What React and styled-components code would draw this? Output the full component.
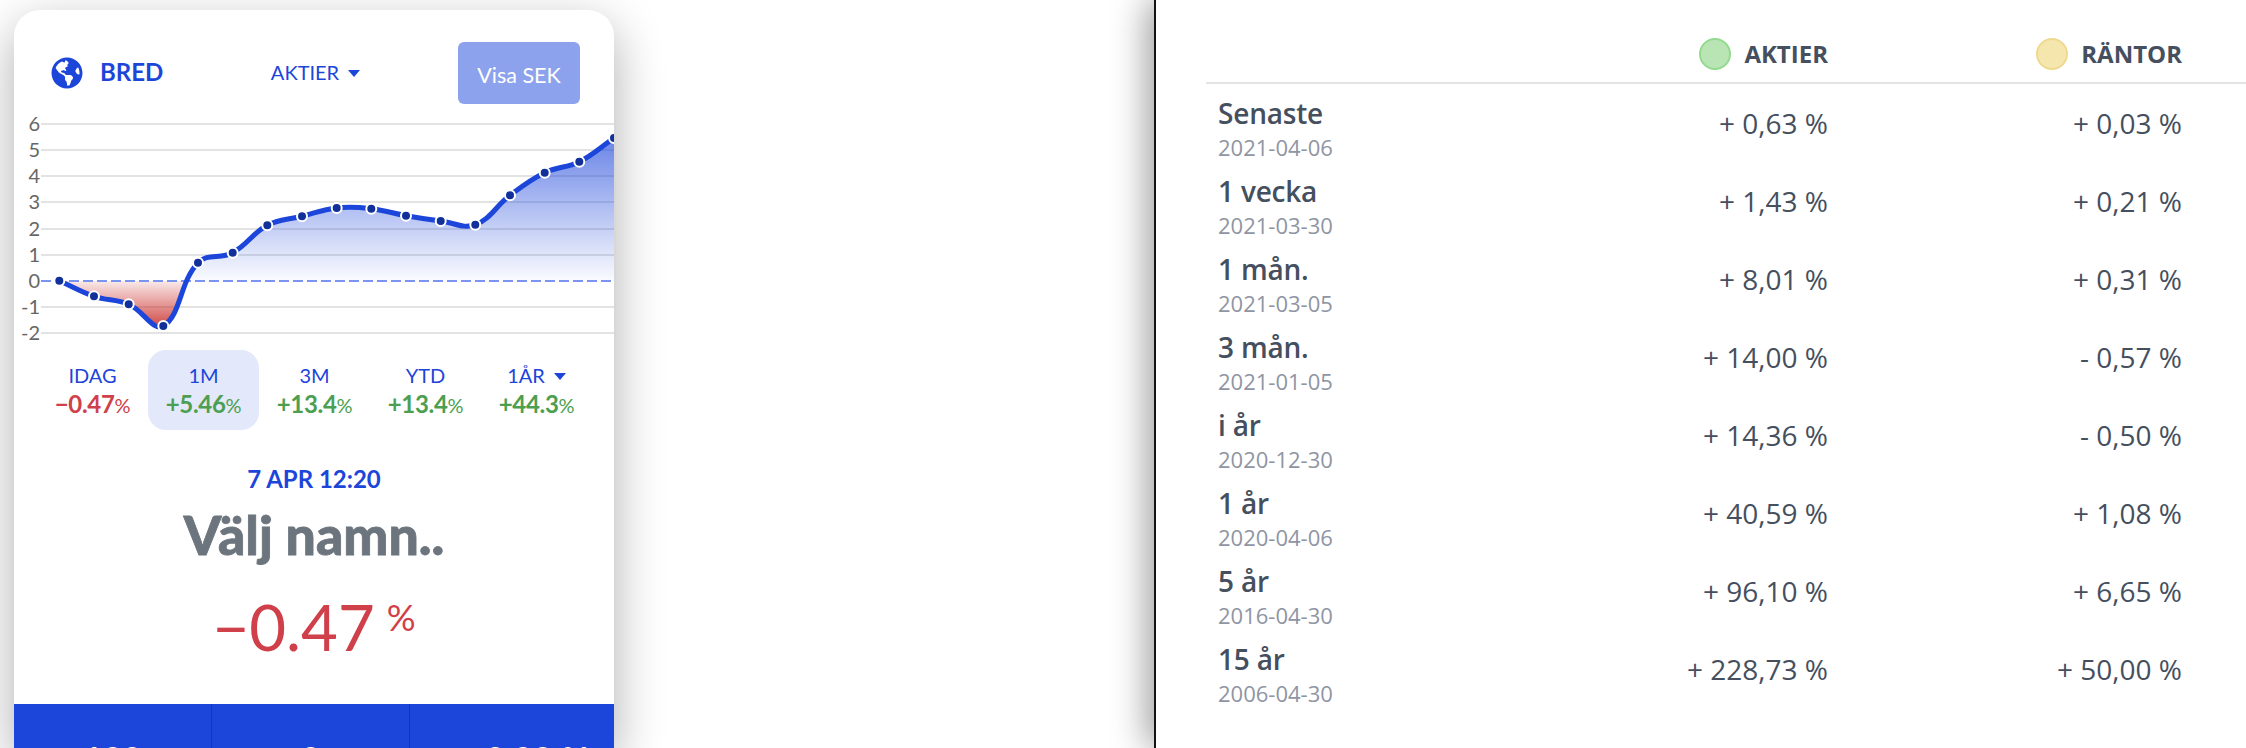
import React from 'react';
import styled, { createGlobalStyle } from 'styled-components';
import { FaGlobeAmericas } from 'react-icons/fa';

const BLUE = '#1c45da';
const RED = '#d0404a';
const GREEN = '#4c9f50';
const SLATE = '#454f5e';

const GlobalStyle = createGlobalStyle`
  html, body {
    margin: 0;
    padding: 0;
    background: #fff;
  }
`;

const Page = styled.div`
  width: 2246px;
  height: 748px;
  display: flex;
  overflow: hidden;
  background: #fff;
`;
const LeftSide = styled.div`
  width: 1154px;
  flex: none;
  padding: 10px 0 0 14px;
  box-sizing: border-box;
`;
const Card = styled.div`
  width: 600px;
  height: 738px;
  background: #fff;
  border-radius: 26px 26px 0 0;
  box-shadow: 0 16px 50px rgba(0, 0, 0, 0.32);
  overflow: hidden;
  font-family: 'Lato', sans-serif;
`;
const CardHeader = styled.div`
  height: 100px;
  box-sizing: border-box;
  padding: 32px 34px 6px 37px;
  display: grid;
  grid-template-columns: 1fr 1fr 1fr;
  align-items: center;
`;
const Brand = styled.div`
  display: flex;
  align-items: center;
  gap: 17px;
  color: ${BLUE};
  font-size: 24px;
  font-weight: 700;
  svg {
    width: 32px;
    height: 32px;
  }
`;
const BrandName = styled.span`
  margin-bottom: 4px;
`;
const Caret = styled.span`
  display: inline-block;
  margin-left: 9px;
  vertical-align: 3px;
  border-top: 7px solid ${BLUE};
  border-left: 6px solid transparent;
  border-right: 6px solid transparent;
`;
const MarketPick = styled.div`
  color: ${BLUE};
  font-size: 20px;
  justify-self: center;
  margin-bottom: 2px;
`;
const VisaButton = styled.button`
  justify-self: end;
  width: 122px;
  height: 62px;
  border: 0;
  border-radius: 6px;
  background: #8da2ec;
  color: #fff;
  font-family: inherit;
  font-size: 21.5px;
  padding: 4px 0 0;
`;
const ChartSvg = styled.svg`
  display: block;
  width: 600px;
  height: 235px;
`;
const Tabs = styled.div`
  display: grid;
  grid-template-columns: repeat(5, 111px);
  margin: 5px 0 0 23px;
`;
const Tab = styled.div`
  height: 80px;
  box-sizing: border-box;
  padding-top: 12px;
  border-radius: 18px;
  text-align: center;
  background: ${(p) => (p.$active ? '#e3e8fb' : 'transparent')};
`;
const TabLabel = styled.div`
  color: ${BLUE};
  font-size: 20px;
  line-height: 26px;
`;
const TabValue = styled.div`
  color: ${(p) => (p.$negative ? RED : GREEN)};
  font-size: 24px;
  font-weight: 700;
  line-height: 32px;
  letter-spacing: -0.3px;
  span {
    font-size: 20px;
    font-weight: 400;
  }
`;
const Summary = styled.div`
  height: 274px;
  box-sizing: border-box;
  text-align: center;
  padding-top: 34px;
`;
const SummaryDate = styled.div`
  color: ${BLUE};
  font-size: 24px;
  font-weight: 700;
  line-height: 30px;
`;
const SummaryName = styled.div`
  color: #6c757d;
  font-size: 53.5px;
  font-weight: 900;
  line-height: 62px;
  margin-top: 9px;
  -webkit-text-stroke: 0.8px #6c757d;
`;
const SummaryChange = styled.div`
  color: ${RED};
  font-size: 63.5px;
  line-height: 80px;
  margin-top: 22px;
  sup {
    font-size: 36px;
    margin-left: 12px;
    line-height: 0;
    vertical-align: 20px;
  }
`;
const StatBar = styled.div`
  height: 44px;
  overflow: hidden;
  display: grid;
  grid-template-columns: 197px 198px 1fr;
  background: ${BLUE};
  color: #fff;
`;
const Stat = styled.div`
  border-left: ${(p) => (p.$first ? '0' : '1px solid #1636ad')};
  padding: 35px 0 0 ${(p) => p.$indent || 0}px;
  text-align: center;
  font-size: 34px;
  font-weight: 700;
  line-height: 40px;
`;

const RightSide = styled.div`
  flex: 1;
  position: relative;
  border-left: 2px solid #15130f;
  background: #fff;
  box-shadow: -6px 0 34px rgba(0, 0, 0, 0.4);
  padding-left: 50px;
  font-family: 'Open Sans', sans-serif;
  color: ${SLATE};
`;
const TableHead = styled.div`
  height: 84px;
  box-sizing: border-box;
  border-bottom: 2px solid #e4e4e4;
  padding: 38px 0 0 12px;
  display: grid;
  grid-template-columns: 300px 310px 354px;
`;
const HeadCell = styled.div`
  grid-column: ${(p) => p.$col};
  display: flex;
  justify-content: flex-end;
  align-items: center;
  gap: 13px;
  height: 32px;
  font-size: 24px;
  font-weight: 700;
`;
const HeadLabel = styled.span`
  margin-bottom: 2px;
`;
const Dot = styled.span`
  width: 32px;
  height: 32px;
  box-sizing: border-box;
  border-radius: 50%;
  background: ${(p) => p.$fill};
  border: 2px solid ${(p) => p.$edge};
`;
const TableRow = styled.div`
  height: 78px;
  padding-left: 12px;
  display: grid;
  grid-template-columns: 300px 310px 354px;
`;
const PeriodName = styled.div`
  font-size: 28px;
  font-weight: 600;
  line-height: 38px;
  padding-top: 10px;
  letter-spacing: -0.2px;
`;
const PeriodDate = styled.div`
  color: #8f95a3;
  font-size: 22px;
  font-weight: 400;
  line-height: 30px;
  letter-spacing: 0;
`;
const Value = styled.div`
  font-size: 28px;
  line-height: 38px;
  padding-top: 20px;
  text-align: right;
`;

const tabs = [
  { label: 'IDAG', value: '−0.47', negative: true },
  { label: '1M', value: '+5.46', active: true },
  { label: '3M', value: '+13.4' },
  { label: 'YTD', value: '+13.4' },
  { label: '1ÅR', value: '+44.3', caret: true },
];

const rows = [
  ['Senaste', '2021-04-06', '+ 0,63 %', '+ 0,03 %'],
  ['1 vecka', '2021-03-30', '+ 1,43 %', '+ 0,21 %'],
  ['1 mån.', '2021-03-05', '+ 8,01 %', '+ 0,31 %'],
  ['3 mån.', '2021-01-05', '+ 14,00 %', '- 0,57 %'],
  ['i år', '2020-12-30', '+ 14,36 %', '- 0,50 %'],
  ['1 år', '2020-04-06', '+ 40,59 %', '+ 1,08 %'],
  ['5 år', '2016-04-30', '+ 96,10 %', '+ 6,65 %'],
  ['15 år', '2006-04-30', '+ 228,73 %', '+ 50,00 %'],
];

// chart uses page coordinates, see the viewBox
const points = [
  [59.3, 280.7], [94, 296.3], [128.7, 304.3], [163.3, 326], [198, 262.7],
  [232.7, 252.7], [267.3, 225.3], [302, 216.3], [336.7, 208], [371.3, 208.7],
  [406, 215.7], [440.7, 221], [475.3, 224.7], [510, 195.3], [544.7, 172.7],
  [579.3, 161.7], [614, 138],
];
const gridLines = [
  ['6', 124], ['5', 150], ['4', 176], ['3', 202], ['2', 229],
  ['1', 255], ['0', 281], ['-1', 307], ['-2', 333],
];

// same spline as chart.js with tension 0.4
function splinePath(pts, tension = 0.4) {
  let d = `M${pts[0][0]} ${pts[0][1]}`;
  const ctrl = (prev, cur, next) => {
    const d01 = Math.hypot(cur[0] - prev[0], cur[1] - prev[1]);
    const d12 = Math.hypot(next[0] - cur[0], next[1] - cur[1]);
    const fa = (tension * d01) / (d01 + d12);
    const fb = (tension * d12) / (d01 + d12);
    return [
      [cur[0] - fa * (next[0] - prev[0]), cur[1] - fa * (next[1] - prev[1])],
      [cur[0] + fb * (next[0] - prev[0]), cur[1] + fb * (next[1] - prev[1])],
    ];
  };
  for (let i = 0; i < pts.length - 1; i++) {
    const a = ctrl(pts[i - 1] || pts[i], pts[i], pts[i + 1]);
    const b = ctrl(pts[i], pts[i + 1], pts[i + 2] || pts[i + 1]);
    d += `C${a[1][0]} ${a[1][1]} ${b[0][0]} ${b[0][1]} ${pts[i + 1][0]} ${pts[i + 1][1]}`;
  }
  return d;
}

function Chart() {
  const line = splinePath(points);
  const area = `${line}L614 281L59.3 281Z`;
  return (
    <ChartSvg viewBox="14 110 600 235">
      <defs>
        <linearGradient id="upFill" gradientUnits="userSpaceOnUse" x1="0" y1="138" x2="0" y2="281">
          <stop offset="0" stopColor={BLUE} stopOpacity="0.66" />
          <stop offset="1" stopColor={BLUE} stopOpacity="0.02" />
        </linearGradient>
        <linearGradient id="downFill" gradientUnits="userSpaceOnUse" x1="0" y1="281" x2="0" y2="328">
          <stop offset="0" stopColor="#c9302c" stopOpacity="0.1" />
          <stop offset="1" stopColor="#c9302c" stopOpacity="0.9" />
        </linearGradient>
        <clipPath id="aboveZero"><rect x="14" y="110" width="600" height="171" /></clipPath>
        <clipPath id="belowZero"><rect x="14" y="281" width="600" height="64" /></clipPath>
      </defs>
      {gridLines.map(([label, y]) => (
        <g key={label}>
          {label !== '0' && <line x1="41" x2="614" y1={y} y2={y} stroke="#e3e3e3" strokeWidth="2" />}
          <text x="40" y={y + 7} textAnchor="end" fontFamily="Lato, sans-serif" fontSize="20" fill="#666">{label}</text>
        </g>
      ))}
      <path d={area} fill="url(#upFill)" clipPath="url(#aboveZero)" />
      <path d={area} fill="url(#downFill)" clipPath="url(#belowZero)" />
      <line x1="41" x2="614" y1="281" y2="281" stroke="#7a94f0" strokeWidth="2" strokeDasharray="10 4" />
      <path d={line} fill="none" stroke={BLUE} strokeWidth="5" />
      {points.map(([x, y]) => (
        <circle key={x} cx={x} cy={y} r="5" fill="#12309a" stroke="#fff" strokeWidth="2" />
      ))}
    </ChartSvg>
  );
}

export default function App() {
  return (
    <Page>
      <GlobalStyle />
      <LeftSide>
        <Card>
          <CardHeader>
            <Brand>
              <FaGlobeAmericas />
              <BrandName>BRED</BrandName>
            </Brand>
            <MarketPick>AKTIER<Caret /></MarketPick>
            <VisaButton>Visa SEK</VisaButton>
          </CardHeader>
          <Chart />
          <Tabs>
            {tabs.map((t) => (
              <Tab key={t.label} $active={t.active}>
                <TabLabel>{t.label}{t.caret && <Caret />}</TabLabel>
                <TabValue $negative={t.negative}>{t.value}<span>%</span></TabValue>
              </Tab>
            ))}
          </Tabs>
          <Summary>
            <SummaryDate>7 APR 12:20</SummaryDate>
            <SummaryName>Välj namn..</SummaryName>
            <SummaryChange>−0.47<sup>%</sup></SummaryChange>
          </Summary>
          <StatBar>
            <Stat $first>100</Stat>
            <Stat>0</Stat>
            <Stat $indent={50}>0.00 %</Stat>
          </StatBar>
        </Card>
      </LeftSide>
      <RightSide>
        <TableHead>
          <HeadCell $col={2}><Dot $fill="#b9e5b5" $edge="#93da8e" /><HeadLabel>AKTIER</HeadLabel></HeadCell>
          <HeadCell $col={3}><Dot $fill="#f5e6ae" $edge="#efd98f" /><HeadLabel>RÄNTOR</HeadLabel></HeadCell>
        </TableHead>
        {rows.map(([name, date, stocks, bonds]) => (
          <TableRow key={name}>
            <PeriodName>
              {name}
              <PeriodDate>{date}</PeriodDate>
            </PeriodName>
            <Value>{stocks}</Value>
            <Value>{bonds}</Value>
          </TableRow>
        ))}
      </RightSide>
    </Page>
  );
}
